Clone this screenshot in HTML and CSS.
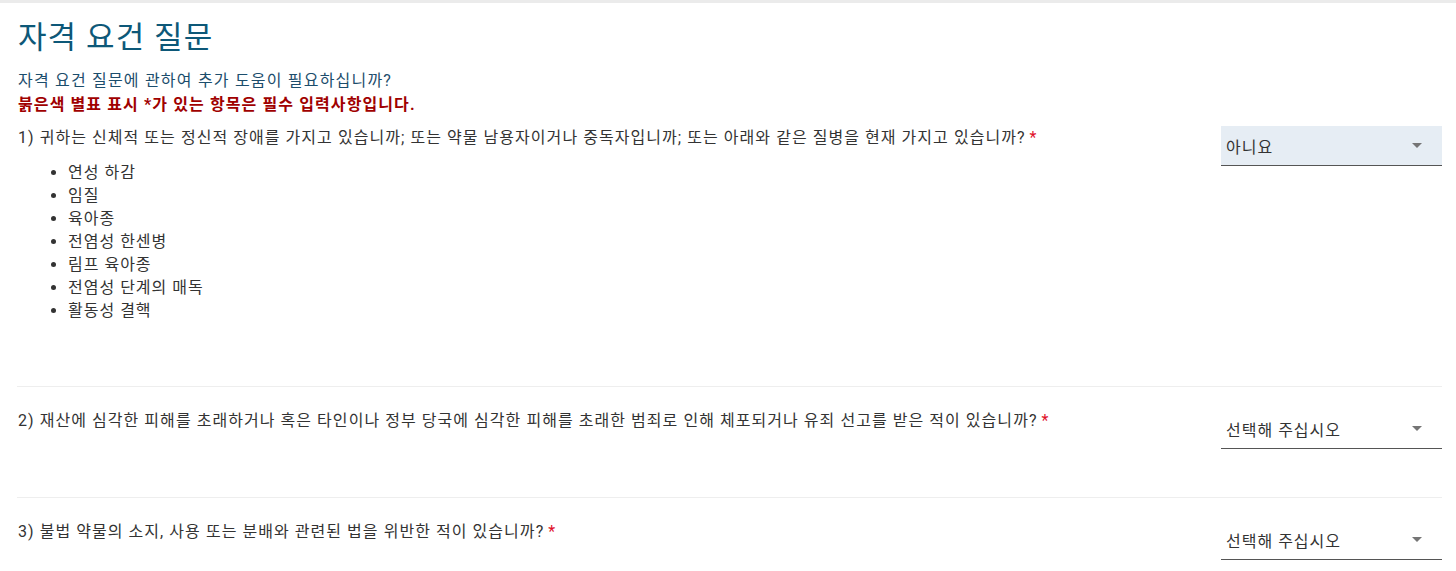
FILE: index.html
```html
<!DOCTYPE html>
<html lang="ko">
<head>
<meta charset="utf-8">
<title>자격 요건 질문</title>
<link rel="stylesheet" href="styles.css">
</head>
<body>
<div class="topbar"></div>
<main class="page">
  <h1 class="title">자격 요건 질문</h1>
  <p class="help">자격 요건 질문에 관하여 추가 도움이 필요하십니까?</p>
  <p class="req">붉은색 별표 표시 *가 있는 항목은 필수 입력사항입니다.</p>

  <section class="row first">
    <div class="q">
      <p class="qtext">1) 귀하는 신체적 또는 정신적 장애를 가지고 있습니까; 또는 약물 남용자이거나 중독자입니까; 또는 아래와 같은 질병을 현재 가지고 있습니까?<span class="star">*</span></p>
      <ul class="list">
        <li>연성 하감</li>
        <li>임질</li>
        <li>육아종</li>
        <li>전염성 한센병</li>
        <li>림프 육아종</li>
        <li>전염성 단계의 매독</li>
        <li>활동성 결핵</li>
      </ul>
    </div>
    <div class="select filled"><span>아니요</span><i class="arrow"></i></div>
  </section>

  <section class="row">
    <div class="q">
      <p class="qtext">2) 재산에 심각한 피해를 초래하거나 혹은 타인이나 정부 당국에 심각한 피해를 초래한 범죄로 인해 체포되거나 유죄 선고를 받은 적이 있습니까?<span class="star">*</span></p>
    </div>
    <div class="select"><span>선택해 주십시오</span><i class="arrow"></i></div>
  </section>

  <section class="row">
    <div class="q">
      <p class="qtext">3) 불법 약물의 소지, 사용 또는 분배와 관련된 법을 위반한 적이 있습니까?<span class="star">*</span></p>
    </div>
    <div class="select"><span>선택해 주십시오</span><i class="arrow"></i></div>
  </section>
</main>
</body>
</html>
```
FILE: styles.css
```css
* { box-sizing: border-box; }
html, body { margin: 0; padding: 0; background: #fff; }
body {
  font-family: Roboto, "Noto Sans CJK KR", sans-serif;
  color: #333;
  overflow: hidden;
}
.topbar { height: 3px; background: #ebebeb; }
.page { padding: 0 14px 0 17px; }
.title {
  margin: 14px 0 0 1px;
  font-size: 31px;
  font-weight: 400;
  line-height: 42px;
  letter-spacing: 1.1px;
  color: #0d5878;
}
.help {
  margin: 10px 0 0 1px;
  font-size: 16px;
  line-height: 24px;
  letter-spacing: 1.2px;
  color: #1c4d6c;
}
.req {
  margin: 0 0 0 1px;
  font-size: 16px;
  line-height: 24px;
  letter-spacing: 1.1px;
  font-weight: 700;
  color: #a00000;
}
.row {
  display: flex;
  justify-content: space-between;
  align-items: flex-start;
  padding: 22px 0 48px 0;
  border-top: 1px solid #eeeeee;
}
.row.first { border-top: none; padding-top: 9px; }
.q { flex: 1; }
.qtext {
  margin: 0 0 0 1px;
  font-size: 16px;
  line-height: 24px;
  letter-spacing: 1.05px;
  color: #333;
}
.star { color: #e0102a; margin-left: 4px; }
.list {
  margin: 11px 0 16px 0;
  padding-left: 51px;
  font-size: 16px;
  line-height: 23px;
  letter-spacing: 1px;
}
.select {
  width: 221px;
  height: 40px;
  flex: none;
  display: flex;
  align-items: center;
  justify-content: space-between;
  padding: 0 20px 0 5px;
  border-bottom: 1px solid #555;
  font-size: 16px;
  letter-spacing: 1px;
  color: #333;
}
.select.filled { background: #e6edf4; }
.arrow {
  width: 0; height: 0;
  border-left: 5px solid transparent;
  border-right: 5px solid transparent;
  border-top: 5px solid #757575;
}
```
